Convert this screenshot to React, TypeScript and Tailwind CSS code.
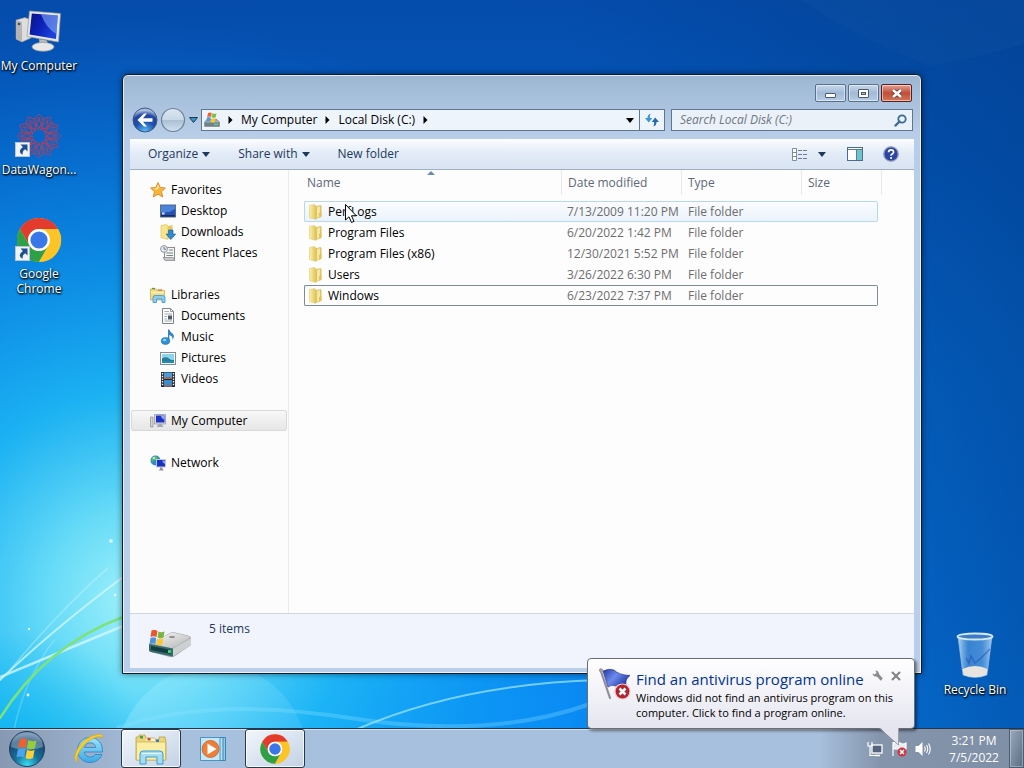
import React, { useState } from "react";

const FONT = "font-['Open_Sans','Noto_Sans',sans-serif]";

type IconProps = { className?: string };

/* ---------- Wallpaper ---------- */

function Wallpaper() {
  return (
    <svg className="absolute inset-0 h-full w-full" viewBox="0 0 1024 768" preserveAspectRatio="none" aria-hidden="true">
      <defs>
        <linearGradient id="wp-base" x1="0" y1="0" x2="0" y2="1">
          <stop offset="0" stopColor="#054cab" />
          <stop offset="0.2" stopColor="#0359bd" />
          <stop offset="0.5" stopColor="#0472d8" />
          <stop offset="0.8" stopColor="#067fee" />
          <stop offset="1" stopColor="#088cfa" />
        </linearGradient>
        <linearGradient id="wp-right" x1="0.55" y1="0" x2="1" y2="0">
          <stop offset="0" stopColor="#023d8c" stopOpacity="0" />
          <stop offset="1" stopColor="#023d8c" stopOpacity="0.6" />
        </linearGradient>
        <radialGradient id="wp-glow" gradientUnits="userSpaceOnUse" cx="140" cy="600" r="580">
          <stop offset="0" stopColor="#a4f2fa" />
          <stop offset="0.16" stopColor="#6ce0f8" stopOpacity="0.95" />
          <stop offset="0.36" stopColor="#20bcf6" stopOpacity="0.85" />
          <stop offset="0.6" stopColor="#12a4f4" stopOpacity="0.55" />
          <stop offset="1" stopColor="#0c84ec" stopOpacity="0" />
        </radialGradient>
        <radialGradient id="wp-bottom" gradientUnits="userSpaceOnUse" cx="20" cy="760" r="130">
          <stop offset="0" stopColor="#06b4ee" stopOpacity="0.8" />
          <stop offset="1" stopColor="#06b4ee" stopOpacity="0" />
        </radialGradient>
        <linearGradient id="wp-bubble" x1="0" y1="0" x2="1" y2="0">
          <stop offset="0" stopColor="#b0f0ff" stopOpacity="0.3" />
          <stop offset="1" stopColor="#b0f0ff" stopOpacity="0.12" />
        </linearGradient>
      </defs>
      <rect width="1024" height="768" fill="url(#wp-base)" />
      <rect width="1024" height="768" fill="url(#wp-right)" />
      <rect width="1024" height="768" fill="url(#wp-glow)" />
      <rect width="1024" height="768" fill="url(#wp-bottom)" />
      <path d="M800 0H1024V44Q960 62 930 66Q860 40 800 0Z" fill="#3a7db8" opacity="0.07" />
      <path d="M118 740Q140 674 215 660Q290 674 306 740Z" fill="url(#wp-bubble)" />
      <g fill="none" strokeLinecap="round">
        <path d="M0 677Q60 652 123 626" stroke="#d8f8ff" strokeWidth="2.5" opacity="0.75" />
        <path d="M0 680Q50 632 123 577" stroke="#d8f8ff" strokeWidth="2" opacity="0.75" />
        <path d="M10 670Q60 610 108 568" stroke="#d8f8ff" strokeWidth="1.5" opacity="0.4" />
        <path d="M14 730Q24 680 54 640" stroke="#d8f8ff" strokeWidth="1.5" opacity="0.25" />
        <path d="M0 718Q45 646 123 617" stroke="#7ee27c" strokeWidth="2.5" />
        <path d="M118 728Q210 696 350 718T590 704" stroke="#8ee4ff" strokeWidth="4" opacity="0.3" />
        <path d="M355 730Q460 684 600 680" stroke="#a4e8ff" strokeWidth="2" opacity="0.7" />
      </g>
      <g fill="#e4fcff">
        <circle cx="28" cy="695" r="1.4" />
        <circle cx="29" cy="629" r="1.2" />
        <circle cx="115" cy="595" r="1.2" />
        <circle cx="111" cy="541" r="1.8" />
      </g>
    </svg>
  );
}

/* ---------- Icons ---------- */

function ComputerIcon({ className }: IconProps) {
  return (
    <svg className={className} viewBox="0 0 48 48" aria-hidden="true">
      <defs>
        <linearGradient id="pc-screen" x1="0" y1="0" x2="1" y2="0.5">
          <stop offset="0" stopColor="#0a1484" />
          <stop offset="0.5" stopColor="#0c20b8" />
          <stop offset="1" stopColor="#1c44dc" />
        </linearGradient>
      </defs>
      <path d="M1 12L10 9.5L16 12V30L7 34L1 31Z" fill="#dedede" stroke="#8c8c8c" strokeWidth="0.6" />
      <path d="M1 12L7 14V34L1 31Z" fill="#b4b4b4" />
      <circle cx="4" cy="16" r="1.3" fill="#4c4c4c" />
      <path d="M24 31L32 32.5L33 38H25Z" fill="#bcbcbc" />
      <ellipse cx="28" cy="38.8" rx="11" ry="4.4" fill="#e8e8e8" stroke="#9c9c9c" strokeWidth="0.8" />
      <path d="M14.5 3L45.5 5.5L43.5 34L12 28.5Z" fill="#e6e6e6" stroke="#9a9a9a" strokeWidth="0.7" />
      <path d="M16.8 5.4L42.8 7.6L41 31L14.6 26.6Z" fill="url(#pc-screen)" />
      <path d="M26 6.2L42.8 7.6L41.4 26Q31 20 26 6.2Z" fill="#84a8f4" opacity="0.6" />
    </svg>
  );
}

function DataWagonIcon({ className }: IconProps) {
  const angles = [0, 30, 60, 90, 120, 150, 180, 210, 240, 270, 300, 330];
  return (
    <svg className={className} viewBox="0 0 48 48" aria-hidden="true">
      <g fill="none" stroke="#d0384a" strokeWidth="0.9" opacity="0.85">
        {angles.map((a) => (
          <g key={a} transform={`rotate(${a} 24 24)`}>
            <path d="M24 16L18 8L24 2L30 8Z" />
            <path d="M24 16L14 8M24 16L34 8" />
          </g>
        ))}
        <circle cx="24" cy="24" r="7" strokeWidth="1.6" strokeDasharray="2 1.4" />
      </g>
    </svg>
  );
}

function ChromeIcon({ className }: IconProps) {
  return (
    <svg className={className} viewBox="0 0 48 48" aria-hidden="true">
      <circle cx="24" cy="24" r="22" fill="#fcc426" />
      <path d="M4.9 13A22 22 0 0 1 43.1 13H24A11 11 0 0 0 14.5 29.5Z" fill="#e33b2e" />
      <path d="M4.9 13L14.5 29.5A11 11 0 0 0 33.5 29.5L24 46A22 22 0 0 1 4.9 13Z" fill="#2fa04a" />
      <path d="M43.1 13H24A11 11 0 0 1 33.5 29.5L24 46A22 22 0 0 0 43.1 13Z" fill="#fcc426" />
      <circle cx="24" cy="24" r="11" fill="#fff" />
      <circle cx="24" cy="24" r="8.6" fill="#3b78e7" />
    </svg>
  );
}

function ShortcutArrow() {
  return (
    <svg className="absolute bottom-[3px] left-0 h-[15px] w-[15px]" viewBox="0 0 15 15" aria-hidden="true">
      <rect x="0.5" y="0.5" width="14" height="14" fill="#eef4fa" stroke="#b8c4d0" />
      <path d="M5.5 2.5H12.5V9.5L10.2 7.2Q7 9 7.8 12.8Q1.5 9.5 7.9 4.9Z" fill="#1c4f94" />
    </svg>
  );
}

function RecycleBinIcon({ className }: IconProps) {
  return (
    <svg className={className} viewBox="0 0 48 48" aria-hidden="true">
      <defs>
        <linearGradient id="bin" x1="0" y1="0" x2="1" y2="0">
          <stop offset="0" stopColor="#c4e0f4" stopOpacity="0.9" />
          <stop offset="0.3" stopColor="#5c9ce0" stopOpacity="0.6" />
          <stop offset="0.7" stopColor="#6cacec" stopOpacity="0.6" />
          <stop offset="1" stopColor="#b4d4f0" stopOpacity="0.9" />
        </linearGradient>
      </defs>
      <path d="M7 4.5L12 43Q24 48 36 43L41 4.5Z" fill="url(#bin)" stroke="#a4c4e4" strokeWidth="0.6" />
      <path d="M11.5 37Q24 31 36.5 37L35.5 43Q24 47.5 12.5 43Z" fill="#e8e4e0" />
      <path d="M15 26L18 31L20 24L24 31L29 27L32 24L39 17" fill="none" stroke="#2450b4" strokeWidth="1.4" opacity="0.6" />
      <ellipse cx="24" cy="4.5" rx="17.5" ry="3" fill="#3c7cc4" stroke="#d4e8f4" strokeWidth="1.8" />
    </svg>
  );
}

function StarIcon({ className }: IconProps) {
  return (
    <svg className={className} viewBox="0 0 16 16" aria-hidden="true">
      <path d="M8 0.6L10.2 5.4L15.4 6L11.5 9.5L12.7 15L8 12.2L3.3 15L4.5 9.5L0.6 6L5.8 5.4Z" fill="#fcb434" stroke="#d8862c" strokeWidth="0.9" />
      <path d="M8 2.6L9.3 6L6 8L4.8 7L3 6.7L6.4 6.2Z" fill="#ffeca4" />
    </svg>
  );
}

function DesktopIcon({ className }: IconProps) {
  return (
    <svg className={className} viewBox="0 0 16 16" aria-hidden="true">
      <rect x="0.5" y="2" width="15" height="12" fill="#2450b8" stroke="#5c6c8c" />
      <path d="M1 2.5H15V6Q8 11 1 9Z" fill="#4c84dc" />
      <rect x="1" y="12" width="14" height="1.6" fill="#1c2c5c" />
      <rect x="2" y="9.5" width="2.5" height="2" fill="#d4e4fc" />
    </svg>
  );
}

function FolderIcon({ className }: IconProps) {
  return (
    <svg className={className} viewBox="0 0 16 16" aria-hidden="true">
      <defs>
        <linearGradient id="folder-front" x1="0" y1="0" x2="1" y2="0">
          <stop offset="0" stopColor="#fbf0ac" />
          <stop offset="1" stopColor="#e2c456" />
        </linearGradient>
      </defs>
      <path d="M7 2.5L12.5 1L13.5 2V13L8 15Z" fill="#dcc468" />
      <path d="M9 3L12 2.2V12.5L9 14Z" fill="#f4e8a4" />
      <path d="M1.5 1.5L6.5 0.5L8 2V15.5L1.5 13.5Z" fill="url(#folder-front)" stroke="#dcc260" strokeWidth="0.5" />
      <path d="M11 9L13.5 8V12L11 13Z" fill="#e4c458" />
    </svg>
  );
}

function DownloadsIcon({ className }: IconProps) {
  return (
    <svg className={className} viewBox="0 0 16 16" aria-hidden="true">
      <path d="M1 1.5L6.5 0.5L8 2V15.5L1 13.5Z" fill="#f8e48c" stroke="#d8b850" strokeWidth="0.6" />
      <path d="M8 2L12.5 1V12L8 15Z" fill="#e4c860" />
      <path d="M8.5 6H13V10H15.7L10.8 15.6L6 10H8.5Z" fill="#2c8cd0" stroke="#1c5c94" strokeWidth="0.6" />
    </svg>
  );
}

function RecentIcon({ className }: IconProps) {
  return (
    <svg className={className} viewBox="0 0 16 16" aria-hidden="true">
      <rect x="4.5" y="2.5" width="10" height="12" fill="#f4f4f4" stroke="#8c8c8c" />
      <circle cx="4" cy="4" r="3.4" fill="#e8ecf0" stroke="#8c949c" />
      <path d="M4 2V4.2H6" fill="none" stroke="#4c5c6c" strokeWidth="0.8" />
      <path d="M9 5H13M6.5 8H13M6.5 10.5H13" stroke="#7c848c" />
      <path d="M3 12.5H13L15 15.5H5Z" fill="#c4c8cc" stroke="#848484" strokeWidth="0.7" />
    </svg>
  );
}

function LibrariesIcon({ className }: IconProps) {
  return (
    <svg className={className} viewBox="0 0 16 16" aria-hidden="true">
      <path d="M0.5 2H6L7 3.5H14.5V13H0.5Z" fill="#f4dc7c" stroke="#c8a448" strokeWidth="0.7" />
      <path d="M2 1.5H5" stroke="#4ca44c" strokeWidth="1.3" />
      <path d="M8 3H12" stroke="#d86c3c" strokeWidth="1.2" />
      <path d="M1 5.5H14" stroke="#fcf4c4" strokeWidth="1.5" />
      <path d="M3 15.5V10.5Q3 8.5 5 8.5H12.5Q15 8.5 15 10.5V15.5H12V12H6.5V15.5Z" fill="#8ccef0" stroke="#3c94c8" strokeWidth="0.8" />
    </svg>
  );
}

function DocumentIcon({ className }: IconProps) {
  return (
    <svg className={className} viewBox="0 0 16 16" aria-hidden="true">
      <path d="M2.5 0.5H10.5L13.5 3.5V15.5H2.5Z" fill="#fcfcfc" stroke="#7c848c" />
      <path d="M10.5 0.5V3.5H13.5" fill="none" stroke="#7c848c" strokeWidth="0.8" />
      <path d="M4.5 3.5H9M4.5 6H12M4.5 8.5H7M4.5 11H7M4.5 13H12" stroke="#98a0a8" strokeWidth="0.9" />
      <rect x="8" y="7.5" width="4" height="4" fill="#4c5c6c" />
    </svg>
  );
}

function MusicIcon({ className }: IconProps) {
  return (
    <svg className={className} viewBox="0 0 16 16" aria-hidden="true">
      <path d="M8 0.5H9.3Q10 3 12.5 4.5Q15.3 7 12.5 11Q13 7 9.3 6V12H8Z" fill="#3484c4" />
      <ellipse cx="5.5" cy="12" rx="4.3" ry="3.4" fill="#2c90d4" stroke="#1c5c94" strokeWidth="0.5" />
      <ellipse cx="4.6" cy="11" rx="1.8" ry="1.2" fill="#8cd0f4" />
    </svg>
  );
}

function PictureIcon({ className }: IconProps) {
  return (
    <svg className={className} viewBox="0 0 16 16" aria-hidden="true">
      <rect x="0.5" y="2.5" width="15" height="12" fill="#fcfcfc" stroke="#7c8c9c" />
      <rect x="2" y="4" width="12" height="9" fill="#8cd4ec" />
      <path d="M2 8.5Q6 6 9 8.5T14 9.5V13H2Z" fill="#2c7c94" />
      <path d="M2 11H14V13H2Z" fill="#1c8cb8" />
    </svg>
  );
}

function VideoIcon({ className }: IconProps) {
  return (
    <svg className={className} viewBox="0 0 16 16" aria-hidden="true">
      <rect x="1" y="1" width="14" height="15" fill="#24282c" />
      <rect x="4" y="1.5" width="8" height="6.5" fill="#4c9cdc" />
      <rect x="4" y="9" width="8" height="6.5" fill="#3c8ccc" />
      <path d="M4 7.5L8 5.5L12 7V8H4ZM4 15L9 13.5L12 15V15.5H4Z" fill="#a4684c" />
      <path d="M2.5 2V15.5M13.5 2V15.5" stroke="#f0f0f0" strokeWidth="1.4" strokeDasharray="1.5 1.2" />
    </svg>
  );
}

function SmallComputerIcon({ className }: IconProps) {
  return (
    <svg className={className} viewBox="0 0 16 16" aria-hidden="true">
      <path d="M0.5 4H3V14H0.5Z" fill="#d4d4d4" stroke="#8c8c8c" strokeWidth="0.7" />
      <path d="M4.5 1.5H15.5V11H4.5Z" fill="#dcdce4" stroke="#8c8ca4" strokeWidth="0.7" />
      <path d="M6 2.5H14.5V9.5H6Z" fill="#1c30c4" />
      <path d="M10.5 2.5H14.5V7Q11.5 6 10.5 2.5Z" fill="#8ca8f4" />
      <path d="M8.5 11H11.5L13.5 14H6.5Z" fill="#a8a8b4" />
    </svg>
  );
}

function NetworkIcon({ className }: IconProps) {
  return (
    <svg className={className} viewBox="0 0 16 16" aria-hidden="true">
      <circle cx="5.5" cy="5.5" r="5" fill="#2c8cc4" />
      <path d="M2 3Q5 0 7 2T5 5T3 8Q0 6 2 3Z" fill="#5cbc5c" />
      <circle cx="4" cy="3" r="1.3" fill="#c4f0fc" opacity="0.8" />
      <rect x="6.5" y="4.5" width="9" height="7.5" fill="#1c30c0" stroke="#c4c8d8" />
      <path d="M12 5.5H15V9Q12.5 8 12 5.5Z" fill="#7c9cf4" />
      <path d="M10 12.5H12.5V14L14 15.5H8.5L10 14Z" fill="#8c90a8" />
    </svg>
  );
}

function DriveIcon({ className }: IconProps) {
  return (
    <svg className={className} viewBox="0 0 44 28" aria-hidden="true">
      <defs>
        <linearGradient id="drive-top" x1="0" y1="0" x2="1" y2="1">
          <stop offset="0" stopColor="#fafafa" />
          <stop offset="1" stopColor="#b4b4b4" />
        </linearGradient>
      </defs>
      <path d="M1 14L22 3Q24 2 27 2.5L40 5.5Q43 6.5 43 9V15L27 26Q25 27.5 22 27L3 22Q1 21.5 1 20Z" fill="#9ca0a0" />
      <path d="M3 13L22 3.5Q24 2.5 27 3L40 6Q43 7 41 8.5L27 17Q25 18.5 22 18Z" fill="url(#drive-top)" />
      <path d="M1 14L25 18.5V26.5L3 22Q1 21.5 1 20Z" fill="#346c6c" />
      <path d="M3 16L23 20V24L3 20Z" fill="#143c44" />
      <path d="M25 18.5L43 8V15L25 26.5Z" fill="#ccd0d0" />
      <ellipse cx="24" cy="7" rx="3" ry="1" fill="#888" />
      <rect x="20" y="20" width="3" height="3" fill="#3cd06c" />
      <path d="M3.5 0.5Q7 -1 9.5 1L8.5 7Q5.5 5.5 2.5 7Z" fill="#e8582c" />
      <path d="M10.5 1.5Q13 3 16.5 1.5L15.5 7.5Q12 9 9.5 7.5Z" fill="#7cb440" />
      <path d="M2.5 8Q5.5 6.5 8.3 8L7.3 14Q4.5 12.5 1.5 14Z" fill="#4a94e0" />
      <path d="M9.3 8.5Q12 10 15.3 8.5L14.3 14.5Q11 16 8.3 14.5Z" fill="#fcc82c" />
    </svg>
  );
}

function SmallDriveIcon({ className }: IconProps) {
  return (
    <svg className={className} viewBox="0 0 16 16" aria-hidden="true">
      <path d="M0.5 10L3 7.5H13L15.5 10V14.5H0.5Z" fill="#a4acb0" stroke="#6c7478" strokeWidth="0.6" />
      <path d="M1 10.5H15V14H1Z" fill="#6c8488" />
      <path d="M10 12.3H14" stroke="#6ce48c" />
      <path d="M4 1Q6 0 7.8 1L7 5Q5.2 4 3.2 5Z" fill="#f0642c" />
      <path d="M8.5 1.3Q10.5 2.3 12.5 1.3L11.7 5.3Q9.7 6.3 7.7 5.3Z" fill="#7cc040" />
      <path d="M3 5.6Q5 4.6 6.8 5.6L6 9.6Q4.2 8.6 2.2 9.6Z" fill="#4a9ce8" />
      <path d="M7.5 6Q9.5 7 11.5 6L10.7 10Q8.7 11 6.7 10Z" fill="#fcc82c" />
    </svg>
  );
}

function Caret({ className = "" }: IconProps) {
  return (
    <svg className={`h-[5px] w-[8px] ${className}`} viewBox="0 0 8 5" aria-hidden="true">
      <path d="M0 0H8L4 5Z" fill="currentColor" />
    </svg>
  );
}

function CrumbArrow() {
  return (
    <svg className="h-[8px] w-[5px] shrink-0" viewBox="0 0 5 8" aria-hidden="true">
      <path d="M0.5 0L4.5 4L0.5 8Z" fill="#000" />
    </svg>
  );
}

function StartOrb() {
  return (
    <svg className="h-[38px] w-[38px]" viewBox="0 0 38 38" aria-hidden="true">
      <defs>
        <radialGradient id="orb" cx="0.5" cy="0.95" r="0.9">
          <stop offset="0" stopColor="#3cdcf0" />
          <stop offset="0.4" stopColor="#14709c" />
          <stop offset="0.8" stopColor="#1c4870" />
          <stop offset="1" stopColor="#5c80a4" />
        </radialGradient>
      </defs>
      <circle cx="19" cy="19" r="17.5" fill="url(#orb)" stroke="#24405c" />
      <path d="M3 17Q4 3 19 2.5Q34 3 35 17Q19 23 3 17Z" fill="#d4e4f0" opacity="0.35" />
      <path d="M12 9.5Q15.5 7.5 19 9.5L17.8 18Q14 16 10 18Z" fill="#f0602c" />
      <path d="M20.3 10Q24 12 28.5 10.5L26.8 18.6Q22.5 20 19 18.3Z" fill="#94cc3c" />
      <path d="M9.8 19.4Q14 17.5 17.6 19.4L16.2 27.6Q12.5 25.5 8.5 27.4Z" fill="#4ca4ec" />
      <path d="M18.9 19.8Q22.6 21.6 26.6 20L25 28Q21 30 17.5 28Z" fill="#fcd034" />
    </svg>
  );
}

function InternetExplorerIcon() {
  return (
    <svg className="h-8 w-8" viewBox="0 0 32 32" aria-hidden="true">
      <defs>
        <linearGradient id="ie" x1="0" y1="0" x2="0" y2="1">
          <stop offset="0" stopColor="#9ce4fc" />
          <stop offset="1" stopColor="#3ca8e4" />
        </linearGradient>
      </defs>
      <path
        d="M17 4.5C10 4.5 4.5 10 4.5 17S10 29.5 17 29.5C22.5 29.5 27 26.5 29 21.5H22C21 23.2 19.3 24 17.2 24C13.8 24 11.5 22 11.3 19H29.5C30 10.5 25 4.5 17 4.5ZM11.5 14.5C12 11.5 14.2 9.8 17.1 9.8S22.4 11.5 22.7 14.5Z"
        fill="url(#ie)"
        stroke="#2a84bc"
        strokeWidth="0.8"
      />
      <path d="M5 29.5Q-1.5 26 5 15T24 1.5Q30 0 30 5Q28 3 24 4Q14 7 8 16T5 29.5Z" fill="#f8cc2c" stroke="#cc9c1c" strokeWidth="0.5" />
    </svg>
  );
}

function ExplorerIcon() {
  return (
    <svg className="h-8 w-8" viewBox="0 0 32 32" aria-hidden="true">
      <path d="M1 4H4V2H10L11 5H20V7H24V4H30L31 9V27H1Z" fill="#ecd478" stroke="#b8983c" strokeWidth="0.7" />
      <path d="M1.5 9H30.5V27H1.5Z" fill="#faeea4" stroke="#ccb04c" strokeWidth="0.7" />
      <path d="M11 5.5H20V8H11Z" fill="#fff8dc" />
      <rect x="5" y="3" width="3" height="2.5" fill="#3ca44c" />
      <rect x="12.5" y="5" width="3" height="2.5" fill="#d8482c" />
      <rect x="21" y="6.5" width="3" height="2.5" fill="#3c7cc4" />
      <path d="M5 31V21Q5 18 8 18H25Q28 18 28 21V31H22V24H11V31Z" fill="#a4dcf4" stroke="#3c9cd0" />
      <path d="M7 20.5H26" stroke="#e4f8ff" />
    </svg>
  );
}

function MediaPlayerIcon() {
  return (
    <svg className="h-7 w-7" viewBox="0 0 28 28" aria-hidden="true">
      <path d="M7 2.5H26.5V25.5H7Z" fill="#8cccec" stroke="#3c84b4" />
      <path d="M4 2.5H24V25.5H4Z" fill="#b4dff4" stroke="#3c84b4" />
      <path d="M1.5 2.5H21V25.5H1.5Z" fill="#c4e8f8" stroke="#4c94c4" />
      <circle cx="11.5" cy="14" r="8.5" fill="#ec8038" stroke="#c8642c" strokeWidth="0.8" />
      <path d="M8.5 8.5L17.5 14L8.5 19.5Z" fill="#fff" />
    </svg>
  );
}

function FlagAlertIcon() {
  return (
    <svg className="h-8 w-8 shrink-0" viewBox="0 0 32 32" aria-hidden="true">
      <defs>
        <linearGradient id="flag" x1="0" y1="0" x2="1" y2="0.6">
          <stop offset="0" stopColor="#2434a0" />
          <stop offset="0.5" stopColor="#6c8cec" />
          <stop offset="1" stopColor="#2438ac" />
        </linearGradient>
      </defs>
      <path d="M1.5 2L11 30" stroke="#8c9098" strokeWidth="2.2" strokeLinecap="round" />
      <circle cx="2" cy="2.2" r="2" fill="#9c9c94" />
      <path d="M4 3Q10 0 15 2Q20 7 31 7.5Q26 11 27 17Q20 14 17 18Q12 16 9 19Z" fill="url(#flag)" stroke="#1c2888" strokeWidth="0.6" />
      <circle cx="23.5" cy="23.5" r="7.5" fill="#b42430" stroke="#e4c8cc" strokeWidth="1.2" />
      <path d="M20.5 20.5L26.5 26.5M26.5 20.5L20.5 26.5" stroke="#fff" strokeWidth="2.6" />
    </svg>
  );
}

/* ---------- Desktop ---------- */

interface DesktopItemProps {
  label: string;
  icon: React.ReactNode;
  shortcut?: boolean;
}

function DesktopItem({ label, icon, shortcut }: DesktopItemProps) {
  return (
    <button className="flex h-[104px] w-[78px] flex-col items-center gap-[2px] text-[12px] leading-[15px] text-white">
      <span className="relative h-12 w-12 shrink-0">
        {icon}
        {shortcut && <ShortcutArrow />}
      </span>
      <span className="[text-shadow:1px_1px_2px_#000,0_1px_2px_#000]">{label}</span>
    </button>
  );
}

/* ---------- Explorer window ---------- */

interface NavItem {
  name: string;
  icon: React.ReactNode;
  child?: boolean;
}

const navGroups: NavItem[][] = [
  [
    { name: "Favorites", icon: <StarIcon className="h-4 w-4" /> },
    { name: "Desktop", icon: <DesktopIcon className="h-4 w-4" />, child: true },
    { name: "Downloads", icon: <DownloadsIcon className="h-4 w-4" />, child: true },
    { name: "Recent Places", icon: <RecentIcon className="h-4 w-4" />, child: true }
  ],
  [
    { name: "Libraries", icon: <LibrariesIcon className="h-4 w-4" /> },
    { name: "Documents", icon: <DocumentIcon className="h-4 w-4" />, child: true },
    { name: "Music", icon: <MusicIcon className="h-4 w-4" />, child: true },
    { name: "Pictures", icon: <PictureIcon className="h-4 w-4" />, child: true },
    { name: "Videos", icon: <VideoIcon className="h-4 w-4" />, child: true }
  ],
  [{ name: "My Computer", icon: <SmallComputerIcon className="h-4 w-4" /> }],
  [{ name: "Network", icon: <NetworkIcon className="h-4 w-4" /> }]
];

const files = [
  { name: "PerfLogs", modified: "7/13/2009 11:20 PM", type: "File folder" },
  { name: "Program Files", modified: "6/20/2022 1:42 PM", type: "File folder" },
  { name: "Program Files (x86)", modified: "12/30/2021 5:52 PM", type: "File folder" },
  { name: "Users", modified: "3/26/2022 6:30 PM", type: "File folder" },
  { name: "Windows", modified: "6/23/2022 7:37 PM", type: "File folder" }
];

function CaptionButtons() {
  const base =
    "flex h-[18px] w-[31px] items-center justify-center rounded-[2px] border shadow-[inset_0_0_0_1px_rgba(255,255,255,0.5)]";
  const plain = `${base} border-[#5a6f8a] bg-linear-to-b from-[#c6d8ec] via-[#a2bad6] to-[#b6cce6]`;
  return (
    <div className="flex justify-end gap-[2px] pr-px">
      <button aria-label="Minimize" className={plain}>
        <svg className="h-[12px] w-[13px]" viewBox="0 0 13 12">
          <rect x="1.5" y="6.5" width="10" height="4" rx="0.5" fill="#fff" stroke="#4c5a70" />
        </svg>
      </button>
      <button aria-label="Maximize" className={plain}>
        <svg className="h-[9px] w-[11px]" viewBox="0 0 11 9">
          <rect x="0.5" y="0.5" width="10" height="8" rx="0.5" fill="#fff" stroke="#4c5a70" />
          <rect x="3.5" y="3.5" width="4" height="2" fill="#a8bcd4" stroke="#4c5a70" />
        </svg>
      </button>
      <button
        aria-label="Close"
        className={`${base} border-[#5c1c20] bg-linear-to-b from-[#e0a496] via-[#c04c38] to-[#d07858]`}
      >
        <svg className="h-[9px] w-[12px]" viewBox="0 0 12 9">
          <path d="M2 1L10 8M10 1L2 8" stroke="#5c3438" strokeWidth="4" />
          <path d="M2 1L10 8M10 1L2 8" stroke="#fff" strokeWidth="2.6" />
        </svg>
      </button>
    </div>
  );
}

function AddressRow() {
  const [query, setQuery] = useState("");

  return (
    <div className="mt-[7px] flex h-[22px] items-center text-[12px]">
      <div className="flex items-center">
        <button aria-label="Back" className="h-[26px] w-[26px]">
          <svg viewBox="0 0 26 26">
            <defs>
              <radialGradient id="back" cx="0.5" cy="1" r="0.9">
                <stop offset="0" stopColor="#5cc4fc" />
                <stop offset="0.5" stopColor="#1c50ac" />
                <stop offset="0.8" stopColor="#2448a0" />
                <stop offset="1" stopColor="#a8bce0" />
              </radialGradient>
            </defs>
            <circle cx="13" cy="13" r="12" fill="url(#back)" stroke="#40587c" />
            <path d="M5.5 13L12 6.5H15L11 11.2H20.5V14.8H11L15 19.5H12Z" fill="#fff" />
          </svg>
        </button>
        <button aria-label="Forward" className="ml-[2px] h-[26px] w-[26px]">
          <svg viewBox="0 0 26 26">
            <defs>
              <linearGradient id="fwd" x1="0" y1="0" x2="0" y2="1">
                <stop offset="0" stopColor="#dce8f2" />
                <stop offset="0.48" stopColor="#c8d8e6" />
                <stop offset="0.52" stopColor="#acc0d4" />
                <stop offset="1" stopColor="#d0e2f0" />
              </linearGradient>
            </defs>
            <circle cx="13" cy="13" r="11.5" fill="url(#fwd)" stroke="#6c8098" strokeWidth="1.2" />
          </svg>
        </button>
        <button aria-label="Recent pages" className="ml-px flex w-3 justify-center">
          <svg className="h-[6px] w-[9px]" viewBox="0 0 9 6">
            <path d="M0.5 0.5H8.5L4.5 5.5Z" fill="#3c94c4" stroke="#1c3854" />
          </svg>
        </button>
      </div>

      <div className="ml-[2px] flex h-[22px] min-w-0 flex-1 items-center border border-[#5f7690] bg-[#eef4fb]">
        <SmallDriveIcon className="ml-[2px] h-4 w-4 shrink-0" />
        <nav className="ml-2 flex items-center gap-2 whitespace-nowrap">
          <CrumbArrow />
          <a href="#computer">My Computer</a>
          <CrumbArrow />
          <a href="#disk">Local Disk (C:)</a>
          <CrumbArrow />
        </nav>
        <button aria-label="Previous locations" className="mr-[5px] ml-auto">
          <Caret className="text-black" />
        </button>
        <button aria-label="Refresh" className="flex h-full w-[25px] items-center justify-center border-l border-[#5f7690]">
          <svg className="h-[14px] w-[14px]" viewBox="0 0 14 14">
            <path d="M5.5 0.5Q2.5 1.5 2.5 5H0L3.8 9.5L7.3 5H4.8Q4.8 2.5 5.5 0.5Z" fill="#3c94d4" />
            <path d="M8.5 13.5Q11.5 12.5 11.5 9H14L10.2 4.5L6.7 9H9.2Q9.2 11.5 8.5 13.5Z" fill="#2868a8" />
          </svg>
        </button>
      </div>

      <div className="ml-[6px] flex h-[22px] w-[242px] items-center border border-[#5f7690] bg-[#eaf1f9] pr-[5px] pl-2">
        <input
          type="text"
          aria-label="Search"
          value={query}
          onChange={(e) => setQuery(e.target.value)}
          placeholder="Search Local Disk (C:)"
          className="min-w-0 flex-1 bg-transparent italic outline-none placeholder:text-[#6f7780]"
        />
        <svg className="h-[13px] w-[13px]" viewBox="0 0 13 13" aria-hidden="true">
          <circle cx="8" cy="5" r="3.7" fill="none" stroke="#3c6c94" strokeWidth="1.8" />
          <path d="M5.5 7.5L1.5 11.5" stroke="#3c6c94" strokeWidth="2.4" strokeLinecap="round" />
        </svg>
      </div>
    </div>
  );
}

function CommandBar() {
  return (
    <div className="flex h-[31px] items-center border-b border-[#a0afc3] bg-linear-to-b from-[#fcfdff] via-[#e2ebf7] to-[#d9e4f2] pr-[15px] pl-[18px] text-[12px] text-[#1e395b]">
      <button className="flex items-center gap-1">
        Organize <Caret />
      </button>
      <button className="ml-7 flex items-center gap-1">
        Share with <Caret />
      </button>
      <button className="ml-7">New folder</button>

      <button aria-label="Change your view" className="ml-auto flex items-center gap-[10px]">
        <svg className="h-[13px] w-4" viewBox="0 0 16 13">
          <path d="M0.5 0.5H4.5V12.5H0.5ZM0.5 4.5H4.5M0.5 8.5H4.5" fill="#fff" stroke="#7c8ca0" />
          <path d="M6 2.5H10M11 2.5H15M6 6.5H10M11 6.5H15M6 10.5H10M11 10.5H15" stroke="#6c7c94" />
        </svg>
        <Caret />
      </button>
      <button aria-label="Show the preview pane" className="ml-[21px]">
        <svg className="h-[14px] w-4" viewBox="0 0 16 14">
          <rect x="0.5" y="0.5" width="15" height="13" fill="#fff" stroke="#4c6c8c" />
          <rect x="10" y="3" width="5" height="10" fill="#6cc4cc" />
          <path d="M1 2.5H15M9.5 3V13" stroke="#5c7c9c" />
        </svg>
      </button>
      <button aria-label="Get help" className="ml-5">
        <svg className="h-4 w-4" viewBox="0 0 16 16">
          <circle cx="8" cy="8" r="7.2" fill="#2c44a4" stroke="#8c98b8" strokeWidth="1.3" />
          <path d="M5.5 6.2Q5.7 3.8 8.1 3.8T10.6 6Q10.6 7.2 9.2 8T8.1 9.8" fill="none" stroke="#fff" strokeWidth="1.7" />
          <circle cx="8.1" cy="12" r="1.1" fill="#fff" />
        </svg>
      </button>
    </div>
  );
}

function NavigationPane() {
  return (
    <nav className="w-[159px] shrink-0 border-r border-[#e6ebf2] bg-[#fcfcfc] px-px pt-[9px] text-[12px] text-black">
      {navGroups.map((group) => (
        <ul key={group[0].name} className="mb-[21px]">
          {group.map((item) => (
            <li key={item.name}>
              <a
                href="#item"
                className={`flex h-[21px] items-center gap-[5px] border ${item.child ? "pl-[28px]" : "pl-[18px]"} ${
                  item.name === "My Computer"
                    ? "rounded-[2px] border-[#d9d9d9] bg-linear-to-b from-[#f8f8f8] to-[#e6e6e6]"
                    : "border-transparent"
                }`}
              >
                {item.icon}
                {item.name}
              </a>
            </li>
          ))}
        </ul>
      ))}
    </nav>
  );
}

function FileList() {
  const rowBorder = (name: string) => {
    if (name === "PerfLogs") return "border-[#b8d6ee] bg-linear-to-b from-[#fafcfe] to-[#ebf3fb]";
    if (name === "Windows") return "border-[#7d8a97]";
    return "border-transparent";
  };

  return (
    <div className="min-w-0 flex-1 overflow-hidden bg-[#fdfdfe] pl-[15px]">
      <table className="w-[578px] table-fixed border-separate border-spacing-0 text-left text-[12px] leading-[19px] text-[#6d6d6d]">
        <thead>
          <tr className="h-[25px] text-[#5c6878] [&>th]:font-normal">
            <th className="relative w-[258px] border-r border-[#e6e9ee] pl-[3px]">
              Name
              <svg className="absolute top-[1px] left-[123px] h-[4px] w-[8px]" viewBox="0 0 8 4" aria-hidden="true">
                <path d="M4 0L8 4H0Z" fill="#6c8caa" />
              </svg>
            </th>
            <th className="w-[120px] border-r border-[#e6e9ee] pl-[6px]">Date modified</th>
            <th className="w-[120px] border-r border-[#e6e9ee] pl-[6px]">Type</th>
            <th className="w-[76px] pl-[6px]">Size</th>
            <td className="border-r border-[#e6e9ee]" />
          </tr>
          <tr className="h-[6px]" />
        </thead>
        <tbody>
          {files.map((file) => (
            <tr key={file.name} className="h-[21px]">
              <td className={`rounded-l-[2px] border-y border-l pl-[3px] text-black ${rowBorder(file.name)}`}>
                <span className="flex items-center gap-1">
                  <FolderIcon className="h-4 w-4" />
                  {file.name}
                </span>
              </td>
              <td className={`border-y pl-[5px] whitespace-nowrap ${rowBorder(file.name)}`}>{file.modified}</td>
              <td className={`border-y pl-[6px] ${rowBorder(file.name)}`}>{file.type}</td>
              <td className={`rounded-r-[2px] border-y border-r ${rowBorder(file.name)}`} />
              <td />
            </tr>
          ))}
        </tbody>
      </table>
    </div>
  );
}

function ExplorerWindow() {
  return (
    <section className="absolute top-[74px] right-[102px] bottom-[54px] left-[122px] flex flex-col rounded-t-[6px] border border-[#101c2c] bg-[#b9d0ea] bg-linear-to-b from-[#9cb6d2] via-[#b8cee8] via-10% to-[#b9cfe9] px-[7px] pb-[5px] shadow-[inset_0_0_0_1px_rgba(255,255,255,0.7),0_0_6px_rgba(0,0,0,0.5)]">
      <header className="pt-[9px] pr-px pb-2 pl-[2px]">
        <CaptionButtons />
        <AddressRow />
      </header>
      <CommandBar />
      <div className="flex min-h-0 flex-1">
        <NavigationPane />
        <FileList />
      </div>
      <footer className="flex h-[55px] gap-[17px] border-t border-[#d0d5e0] bg-[#f1f4fc] pl-[18px] text-[12px] text-[#1e395b]">
        <DriveIcon className="mt-4 h-7 w-11" />
        <p className="mt-[6px]">5 items</p>
      </footer>
    </section>
  );
}

/* ---------- Taskbar ---------- */

function Balloon() {
  return (
    <aside className="absolute right-[109px] bottom-[-1px] flex w-[328px] gap-[5px] rounded-[4px] border border-[#6c6c74] bg-linear-to-b from-white to-[#e5e5f0] pt-[9px] pr-1 pb-2 pl-[11px] shadow-[2px_2px_3px_rgba(0,0,0,0.45)]">
      <FlagAlertIcon />
      <div className="min-w-0 flex-1">
        <div className="flex items-start">
          <h2 className="text-[15px] leading-[22px] whitespace-nowrap text-[#003399]">Find an antivirus program online</h2>
          <div className="ml-auto flex items-center gap-2 pt-[2px] pr-[9px]">
            <button aria-label="Options">
              <svg className="h-[11px] w-[11px]" viewBox="0 0 11 11">
                <path d="M0.5 3.5L2.5 4.5L4.5 3L3.5 0.5Q6.8 0.5 7 4L10.8 8.5L8.8 10.8L4.8 6.6Q0.8 6.8 0.5 3.5Z" fill="#8c8c8c" />
              </svg>
            </button>
            <button aria-label="Close notification">
              <svg className="h-[10px] w-[10px]" viewBox="0 0 10 10">
                <path d="M1 1L9 9M9 1L1 9" stroke="#808080" strokeWidth="2" />
              </svg>
            </button>
          </div>
        </div>
        <p className="text-[11px] leading-[15px] whitespace-nowrap text-black">
          Windows did not find an antivirus program on this
          <br />
          computer. Click to find a program online.
        </p>
      </div>
      <svg className="absolute right-[14px] bottom-[-18px] h-[19px] w-[22px]" viewBox="0 0 22 19" aria-hidden="true">
        <path d="M1 0L21 19V0Z" fill="#e5e5f0" />
        <path d="M1 1L20.5 18V1" fill="none" stroke="#8c8c94" strokeWidth="0.8" />
      </svg>
    </aside>
  );
}

function TaskButton({ label, open, children }: { label: string; open?: boolean; children: React.ReactNode }) {
  return (
    <button
      aria-label={label}
      className={`flex h-full w-[60px] items-center justify-center rounded-[3px] border ${
        open
          ? "border-[#26384e] bg-linear-to-br from-[#f2f6fb] to-[#c3d2e6] shadow-[inset_0_0_0_1px_rgba(255,255,255,0.8)]"
          : "border-transparent"
      }`}
    >
      {children}
    </button>
  );
}

function Taskbar() {
  return (
    <footer className="relative flex h-10 items-stretch border-t border-[#22384f] bg-linear-to-r from-[#8799b2] via-[#a7c0dd] via-15% to-[#a7c0dd] shadow-[inset_0_1px_0_rgba(255,255,255,0.5)]">
      <button aria-label="Start" className="flex w-[59px] items-center pl-2">
        <StartOrb />
      </button>
      <div className="flex gap-[2px]">
        <TaskButton label="Internet Explorer">
          <InternetExplorerIcon />
        </TaskButton>
        <TaskButton label="Windows Explorer" open>
          <ExplorerIcon />
        </TaskButton>
        <TaskButton label="Windows Media Player">
          <MediaPlayerIcon />
        </TaskButton>
        <TaskButton label="Google Chrome" open>
          <ChromeIcon className="h-8 w-8" />
        </TaskButton>
      </div>

      <div className="ml-auto flex items-center bg-linear-to-r from-transparent via-[#8494ab] via-30% to-[#7f8fa6] pl-12">
        <div className="flex items-center gap-2">
          <button aria-label="Network">
            <svg className="h-4 w-4" viewBox="0 0 16 16">
              <rect x="5" y="4" width="10" height="8" fill="#54647c" stroke="#fff" strokeWidth="1.3" />
              <path d="M8 14.5H13" stroke="#fff" strokeWidth="1.5" />
              <path d="M1 1V5H5V1M3 5V14.5H8" fill="none" stroke="#fff" strokeWidth="1.2" />
            </svg>
          </button>
          <button aria-label="Action Center">
            <svg className="h-4 w-4" viewBox="0 0 16 16">
              <path d="M2 1V15M2 2Q6 0 9 2T15 2V8H2" fill="#e8ecf2" stroke="#fff" strokeWidth="1.2" />
              <circle cx="11" cy="11" r="4.5" fill="#d03440" />
              <path d="M9 9L13 13M13 9L9 13" stroke="#fff" strokeWidth="1.5" />
            </svg>
          </button>
          <button aria-label="Volume">
            <svg className="h-4 w-4" viewBox="0 0 16 16">
              <path d="M0.5 5H3.5L7.5 1V15L3.5 11H0.5Z" fill="#fff" />
              <path d="M9.5 5.5Q11 8 9.5 10.5M11.5 4Q14 8 11.5 12M13.5 2.5Q17 8 13.5 13.5" fill="none" stroke="#fff" strokeWidth="1.1" />
            </svg>
          </button>
        </div>
        <time className="w-[78px] pl-2 text-center text-[12px] leading-[17px] text-white">
          3:21 PM
          <br />
          7/5/2022
        </time>
        <button
          aria-label="Show desktop"
          className="h-full w-[15px] border border-[#4c5c72] bg-linear-to-br from-[#9aa8bb] to-[#5b6d84] shadow-[inset_0_0_0_1px_rgba(255,255,255,0.3)]"
        />
      </div>
    </footer>
  );
}

export default function App() {
  return (
    <div className={`relative flex h-screen flex-col overflow-hidden ${FONT}`}>
      <Wallpaper />
      <main className="relative min-h-0 flex-1">
        <div className="flex w-[78px] flex-col pt-2">
          <DesktopItem label="My Computer" icon={<ComputerIcon className="h-12 w-12" />} />
          <DesktopItem label="DataWagon..." icon={<DataWagonIcon className="h-12 w-12" />} shortcut />
          <DesktopItem label="Google Chrome" icon={<ChromeIcon className="h-12 w-12" />} shortcut />
        </div>
        <div className="absolute right-[10px] bottom-[-8px]">
          <DesktopItem label="Recycle Bin" icon={<RecycleBinIcon className="h-12 w-12" />} />
        </div>

        <ExplorerWindow />

        {/* Mouse pointer */}
        <svg className="absolute top-[204px] left-[345px] h-[19px] w-[12px]" viewBox="0 0 12 19" aria-hidden="true">
          <path d="M0.5 0.5V16L4 12.8L6.5 18.5L9 17.3L6.5 11.8H11.3Z" fill="#fff" stroke="#000" />
        </svg>
      </main>
      <div className="relative">
        <div className="absolute inset-x-0 top-0 z-10">
          <Balloon />
        </div>
        <Taskbar />
      </div>
    </div>
  );
}
